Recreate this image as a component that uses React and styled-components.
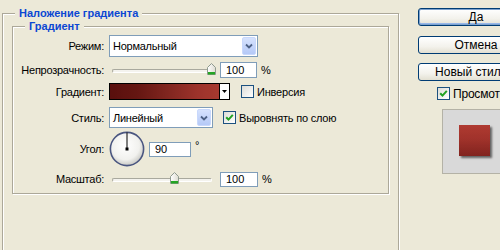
import React from 'react';
import styled, { createGlobalStyle } from 'styled-components';

const GlobalStyle = createGlobalStyle`
  html, body {
    margin: 0;
    padding: 0;
    background: #ece9d8;
  }
  body {
    font-family: 'Liberation Sans', Arial, sans-serif;
    font-size: 11px;
    color: #000;
  }
`;

const Dialog = styled.div`
  display: flex;
  align-items: flex-start;
  width: 500px;
  height: 250px;
  overflow: hidden;
  box-sizing: border-box;
  padding: 7px 0 0 2px;
  background: #ece9d8;
`;

const Group = styled.fieldset`
  flex-shrink: 0;
  margin: 0;
  padding: ${(p) => p.$pad};
  min-inline-size: 0;
  box-sizing: border-box;
  width: ${(p) => p.$w}px;
  height: ${(p) => p.$h}px;
  border: 1px solid #aca899;
  box-shadow: inset 1px 1px 0 #fff, 1px 1px 0 #fff;
`;

const Legend = styled.legend`
  margin-left: ${(p) => p.$ml}px;
  padding: 0 4px;
  background: #ece9d8;
  color: #0b47d3;
  font-weight: bold;
  font-size: 11px;
  line-height: 13px;
`;

const Row = styled.div`
  display: grid;
  grid-template-columns: 91px auto;
  column-gap: 5px;
  align-items: center;
  height: ${(p) => p.$h}px;
  margin-top: ${(p) => p.$mt}px;
`;

const Label = styled.span`
  text-align: right;
  white-space: nowrap;
  letter-spacing: -0.25px;
`;

const Controls = styled.div`
  display: flex;
  align-items: center;
  height: 100%;
`;

const Select = styled.div`
  display: flex;
  align-items: stretch;
  box-sizing: border-box;
  width: ${(p) => p.$w}px;
  height: ${(p) => p.$h}px;
  border: 1px solid #7f9db9;
  background: #fff;
`;

const SelectText = styled.span`
  flex: 1;
  display: flex;
  align-items: center;
  padding-left: 3px;
  letter-spacing: -0.25px;
`;

const DropButton = styled.span`
  display: flex;
  align-items: center;
  justify-content: center;
  width: 14px;
  margin: 1px;
  box-sizing: border-box;
  border: 1px solid #c8d8fc;
  border-radius: 2px;
  background: linear-gradient(#d6e2fd, #b5c9f7);
`;

const Field = styled.input`
  box-sizing: border-box;
  width: ${(p) => p.$w}px;
  height: ${(p) => p.$h}px;
  margin: 0 0 0 ${(p) => p.$ml}px;
  padding: 0 0 0 5px;
  border: 1px solid #7f9db9;
  background: #fff;
  color: #000;
  font-family: 'Liberation Sans', Arial, sans-serif;
  font-size: 11px;
  outline: none;
`;

const Unit = styled.span`
  margin-left: 4px;
  align-self: ${(p) => (p.$top ? 'flex-start' : 'center')};
  margin-top: ${(p) => (p.$top ? '8px' : '0')};
`;

const SliderBox = styled.div`
  position: relative;
  width: 106px;
  height: 16px;
`;

const Track = styled.div`
  position: absolute;
  left: 3px;
  right: 3px;
  top: 7px;
  height: 4px;
  box-sizing: border-box;
  border: 1px solid #a9a99e;
  border-bottom-color: #fff;
  border-right-color: #fff;
  border-radius: 2px;
  background: #f4f3ee;
`;

const Thumb = styled.svg`
  position: absolute;
  top: 1px;
  margin-left: -4px;
`;

const Swatch = styled.div`
  display: flex;
  box-sizing: border-box;
  width: 121px;
  height: 17px;
  border: 1px solid #000;
  background: #fff;
`;

const SwatchFill = styled.div`
  flex: 1;
  border-right: 1px solid #000;
  background:
    radial-gradient(circle, rgba(40, 0, 0, 0.55) 0.6px, transparent 0.8px) 0 0 / 2px 2px,
    linear-gradient(to right, #6a1411, #7a1e18 25%, #a2342b 55%, #c4443a 80%, #d34d40);
  background-clip: content-box;
`;

const SwatchArrow = styled.div`
  display: flex;
  align-items: center;
  justify-content: center;
  width: 9px;
`;

const Check = styled.span`
  display: inline-flex;
  align-items: center;
  justify-content: center;
  box-sizing: border-box;
  width: 13px;
  height: 13px;
  margin-left: ${(p) => p.$ml}px;
  border: 1px solid #1c5180;
  background: linear-gradient(135deg, #dcdcd7, #fff);
  flex-shrink: 0;
`;

const CheckText = styled.span`
  margin-left: 3px;
  white-space: nowrap;
  letter-spacing: -0.2px;
  font-size: ${(p) => p.$size || 11}px;
`;

const Side = styled.div`
  flex-shrink: 0;
  display: flex;
  flex-direction: column;
  align-items: flex-start;
  margin-left: 19px;
  padding-top: 1px;
`;

const Button = styled.button`
  flex-shrink: 0;
  box-sizing: border-box;
  width: 116px;
  height: 18px;
  margin: 0 0 ${(p) => p.$mb}px;
  padding: 0;
  border: 1px solid #003c74;
  border-radius: 3px;
  background: linear-gradient(#ffffff, #f3f2ec 60%, #e3e0d2);
  box-shadow: ${(p) => (p.$default ? 'inset 0 0 0 1px #7da2ce, inset 0 -1px 0 1px #97b7e9' : 'none')};
  font-family: 'Liberation Sans', Arial, sans-serif;
  font-size: 12px;
  line-height: 14px;
  color: #000;
  white-space: nowrap;
`;

const PreviewRow = styled.label`
  display: flex;
  align-items: center;
  margin: 6px 0 0 19px;
  height: 13px;
`;

const Preview = styled.div`
  display: flex;
  align-items: center;
  justify-content: center;
  box-sizing: border-box;
  width: 65px;
  height: 65px;
  margin: 9px 0 0 24px;
  border: 1px solid #b4b2a6;
  background: #d9d9d9;
`;

const PreviewSquare = styled.div`
  width: 31px;
  height: 31px;
  margin: 0 0 2px 0;
  background:
    radial-gradient(circle, rgba(60, 0, 0, 0.35) 0.6px, transparent 0.8px) 0 0 / 2px 2px,
    linear-gradient(#c5453b, #b43c33 45%, #8e2a24);
  box-shadow: 2px 2px 2px rgba(0, 0, 0, 0.55);
`;

function Chevron() {
  return (
    <svg width="8" height="6" viewBox="0 0 8 6">
      <polyline points="1,1.5 4,4.5 7,1.5" fill="none" stroke="#4d6185" strokeWidth="1.8" />
    </svg>
  );
}

function DropSelect({ value, w, h }) {
  return (
    <Select $w={w} $h={h}>
      <SelectText>{value}</SelectText>
      <DropButton>
        <Chevron />
      </DropButton>
    </Select>
  );
}

function Slider({ pos }) {
  return (
    <SliderBox>
      <Track />
      <Thumb width="9" height="12" viewBox="0 0 9 12" style={{ left: `${4 + pos * 98}px` }}>
        <defs>
          <linearGradient id="thumbFill" x1="0" y1="0" x2="1" y2="0">
            <stop offset="0" stopColor="#ffffff" />
            <stop offset="1" stopColor="#dedcd2" />
          </linearGradient>
        </defs>
        <path d="M0.5 4.5 L4.5 0.5 L8.5 4.5 V11.5 H0.5 Z" fill="url(#thumbFill)" stroke="#8f9a8f" />
        <rect x="1" y="9" width="7" height="2.5" fill="#24a524" />
      </Thumb>
    </SliderBox>
  );
}

function CheckBox({ checked, ml = 0 }) {
  return (
    <Check $ml={ml}>
      {checked && (
        <svg width="9" height="9" viewBox="0 0 9 9">
          <polyline points="1.2,4.2 3.5,6.6 7.8,1.8" fill="none" stroke="#21a121" strokeWidth="2" />
        </svg>
      )}
    </Check>
  );
}

function Dial() {
  return (
    <svg width="36" height="36" viewBox="0 0 36 36">
      <defs>
        <radialGradient id="dialFill" cx="0.45" cy="0.4" r="0.6">
          <stop offset="0" stopColor="#ffffff" />
          <stop offset="0.7" stopColor="#f1f1ee" />
          <stop offset="1" stopColor="#c9c9c4" />
        </radialGradient>
      </defs>
      <circle cx="18" cy="18" r="16.6" fill="url(#dialFill)" stroke="#4a5680" strokeWidth="1.6" />
      <line x1="18" y1="18" x2="18" y2="1.5" stroke="#000" strokeWidth="1" />
      <rect x="16.5" y="16.5" width="3" height="3" fill="#000" />
    </svg>
  );
}

export default function App() {
  return (
    <>
      <GlobalStyle />
      <Dialog>
        <Group $w={397} $h={270} $pad="0 0 0 9px">
          <Legend $ml={3}>Наложение градиента</Legend>
          <Group $w={377} $h={174} $pad="0 0 0 0">
            <Legend $ml={12}>Градиент</Legend>
            <Row $h={22} $mt={2}>
              <Label>Режим:</Label>
              <Controls>
                <DropSelect value="Нормальный" w={149} h={22} />
              </Controls>
            </Row>
            <Row $h={16} $mt={5}>
              <Label>Непрозрачность:</Label>
              <Controls>
                <Slider pos={1} />
                <Field readOnly defaultValue="100" $w={37} $h={16} $ml={5} />
                <Unit>%</Unit>
              </Controls>
            </Row>
            <Row $h={17} $mt={5}>
              <Label>Градиент:</Label>
              <Controls>
                <Swatch>
                  <SwatchFill />
                  <SwatchArrow>
                    <svg width="5" height="3" viewBox="0 0 5 3">
                      <polygon points="0,0 5,0 2.5,3" fill="#000" />
                    </svg>
                  </SwatchArrow>
                </Swatch>
                <CheckBox ml={11} />
                <CheckText>Инверсия</CheckText>
              </Controls>
            </Row>
            <Row $h={21} $mt={7}>
              <Label>Стиль:</Label>
              <Controls>
                <DropSelect value="Линейный" w={104} h={21} />
                <CheckBox checked ml={10} />
                <CheckText>Выровнять по слою</CheckText>
              </Controls>
            </Row>
            <Row $h={36} $mt={3}>
              <Label>Угол:</Label>
              <Controls>
                <Dial />
                <Field readOnly defaultValue="90" $w={42} $h={15} $ml={4} />
                <Unit $top>°</Unit>
              </Controls>
            </Row>
            <Row $h={16} $mt={4}>
              <Label>Масштаб:</Label>
              <Controls>
                <Slider pos={0.62} />
                <Field readOnly defaultValue="100" $w={38} $h={15} $ml={5} />
                <Unit>%</Unit>
              </Controls>
            </Row>
          </Group>
        </Group>
        <Side>
          <Button $default $mb={10}>Да</Button>
          <Button $mb={9}>Отмена</Button>
          <Button $mb={0}>Новый стиль...</Button>
          <PreviewRow>
            <CheckBox checked />
            <CheckText $size={12}>Просмотр</CheckText>
          </PreviewRow>
          <Preview>
            <PreviewSquare />
          </Preview>
        </Side>
      </Dialog>
    </>
  );
}
